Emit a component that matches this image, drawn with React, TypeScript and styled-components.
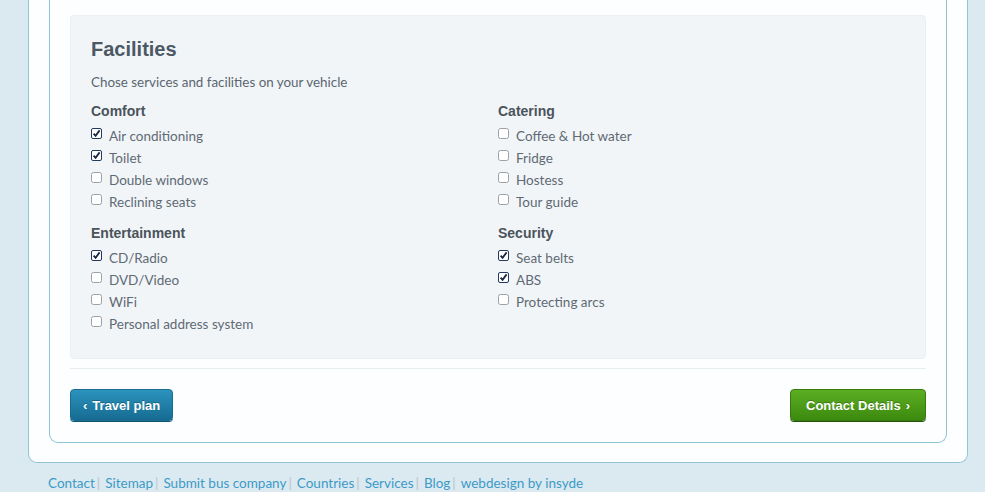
import React from "react";
import styled, { createGlobalStyle } from "styled-components";

const Global = createGlobalStyle`
  html, body { margin: 0; padding: 0; }
  body {
    background: #dbe9f1;
    font-family: "Lato", "Open Sans", sans-serif;
    width: 985px;
    height: 492px;
    overflow: hidden;
  }
`;

const Page = styled.div`
  padding-left: 28px;
  width: 940px;
`;

const OuterCard = styled.div`
  background: #fcfeff;
  border: 1px solid #93c5d6;
  border-top: none;
  border-radius: 0 0 9px 9px;
  padding: 0 20px 19px 20px;
`;

const InnerCard = styled.div`
  background: #fdfeff;
  border: 1px solid #8ec5d5;
  border-top: none;
  border-radius: 0 0 9px 9px;
  padding: 15px 20px 21px 20px;
`;

const Panel = styled.section`
  background: #f1f5f8;
  border: 1px solid #e9eff3;
  border-radius: 4px;
  padding: 20px 20px 23px 20px;
`;

const Title = styled.h2`
  margin: 0;
  font-family: "Liberation Sans", Arial, sans-serif;
  font-size: 20px;
  font-weight: bold;
  color: #4c5964;
  line-height: 26px;
`;

const Intro = styled.p`
  margin: 10px 0 0 0;
  font-size: 13.4px;
  line-height: 20px;
  color: #5b6670;
`;

const Grid = styled.div`
  display: grid;
  grid-template-columns: 407px 1fr;
  row-gap: 10px;
  margin-top: 9px;
`;

const Group = styled.div`
  display: flex;
  flex-direction: column;
`;

const GroupTitle = styled.h3`
  margin: 0 0 4px 0;
  font-family: "Liberation Sans", Arial, sans-serif;
  font-size: 14px;
  font-weight: bold;
  color: #4b535b;
  line-height: 20px;
`;

const Row = styled.label`
  display: flex;
  align-items: center;
  height: 22px;
  font-size: 13.5px;
  color: #5f6a74;
`;

const Box = styled.span`
  width: 12px;
  height: 12px;
  margin-right: 6px;
  margin-top: -4px;
  display: inline-flex;
  svg { display: block; }
`;

const Separator = styled.hr`
  border: none;
  border-top: 1px solid #e6eef2;
  margin: 9px 0 20px 0;
`;

const Actions = styled.div`
  display: flex;
  justify-content: space-between;
  align-items: center;
`;

const Button = styled.button<{ $tone: "blue" | "green" }>`
  height: 32px;
  padding: 0 ${(p) => (p.$tone === "blue" ? "12px" : "15px")};
  font-family: "Liberation Sans", Arial, sans-serif;
  font-size: 13px;
  font-weight: bold;
  color: #fff;
  border-radius: 4px;
  cursor: pointer;
  text-shadow: 0 -1px 0 rgba(0, 0, 0, 0.25);
  ${(p) =>
    p.$tone === "blue"
      ? `
    background: linear-gradient(#2b93bd, #166b92);
    border: 1px solid #1a6d90;
    box-shadow: 0 1px 0 #0f5575;
  `
      : `
    background: linear-gradient(#5cae22, #3c8a0f);
    border: 1px solid #347a0d;
    box-shadow: 0 1px 0 #24570a;
  `}
`;

const Arrow = styled.span<{ $side: "left" | "right" }>`
  margin-${(p) => (p.$side === "left" ? "right" : "left")}: 5px;
`;

const Footer = styled.nav`
  padding: 10px 0 0 20px;
  font-size: 13.5px;
  line-height: 20px;
  color: #3b9bc6;
`;

const FootLink = styled.a`
  color: #3b9bc6;
  text-decoration: none;
`;

const Sep = styled.span`
  color: #b9c6cc;
  margin: 0 5px 0 2px;
`;

const CheckIcon = ({ checked }: { checked: boolean }) =>
  checked ? (
    <svg width="12" height="12" viewBox="0 0 12 12">
      <rect x="0.5" y="0.5" width="10" height="10" rx="1.5" fill="#fff" stroke="#223a60" />
      <path d="M2.6 5.6 L4.6 7.8 L8.6 2.4" fill="none" stroke="#1a2740" strokeWidth="1.8" />
    </svg>
  ) : (
    <svg width="12" height="12" viewBox="0 0 12 12">
      <rect x="0.5" y="0.5" width="10" height="10" rx="2" fill="#fff" stroke="#9aa0a6" />
    </svg>
  );

type Item = { label: string; checked: boolean };
const groups: { title: string; items: Item[] }[] = [
  {
    title: "Comfort",
    items: [
      { label: "Air conditioning", checked: true },
      { label: "Toilet", checked: true },
      { label: "Double windows", checked: false },
      { label: "Reclining seats", checked: false },
    ],
  },
  {
    title: "Catering",
    items: [
      { label: "Coffee & Hot water", checked: false },
      { label: "Fridge", checked: false },
      { label: "Hostess", checked: false },
      { label: "Tour guide", checked: false },
    ],
  },
  {
    title: "Entertainment",
    items: [
      { label: "CD/Radio", checked: true },
      { label: "DVD/Video", checked: false },
      { label: "WiFi", checked: false },
      { label: "Personal address system", checked: false },
    ],
  },
  {
    title: "Security",
    items: [
      { label: "Seat belts", checked: true },
      { label: "ABS", checked: true },
      { label: "Protecting arcs", checked: false },
    ],
  },
];

const links = [
  "Contact",
  "Sitemap",
  "Submit bus company",
  "Countries",
  "Services",
  "Blog",
  "webdesign by insyde",
];

export default function App() {
  return (
    <>
      <Global />
      <Page>
        <OuterCard>
          <InnerCard>
            <Panel>
              <Title>Facilities</Title>
              <Intro>Chose services and facilities on your vehicle</Intro>
              <Grid>
                {groups.map((g) => (
                  <Group key={g.title}>
                    <GroupTitle>{g.title}</GroupTitle>
                    {g.items.map((it) => (
                      <Row key={it.label}>
                        <Box>
                          <CheckIcon checked={it.checked} />
                        </Box>
                        {it.label}
                      </Row>
                    ))}
                  </Group>
                ))}
              </Grid>
            </Panel>
            <Separator />
            <Actions>
              <Button $tone="blue">
                <Arrow $side="left">‹</Arrow>Travel plan
              </Button>
              <Button $tone="green">
                Contact Details<Arrow $side="right">›</Arrow>
              </Button>
            </Actions>
          </InnerCard>
        </OuterCard>
        <Footer>
          {links.map((l, i) => (
            <React.Fragment key={l}>
              <FootLink href="#">{l}</FootLink>
              {i < links.length - 1 && <Sep>|</Sep>}
            </React.Fragment>
          ))}
        </Footer>
      </Page>
    </>
  );
}
